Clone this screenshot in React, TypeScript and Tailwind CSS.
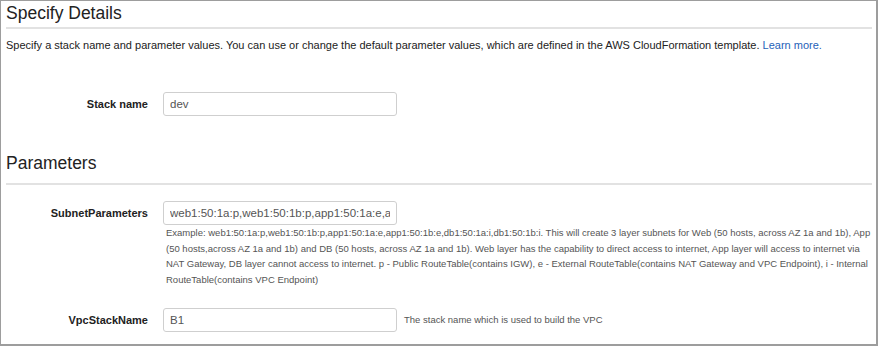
const font = { fontFamily: '"Liberation Sans", Arial, sans-serif' };

function Field({ label, value, help }: { label: string; value: string; help?: string }) {
  return (
    <div className="flex items-center h-[24px]">
      <label className="w-[142px] text-right text-[11px] font-bold text-[#222]">{label}</label>
      <input
        readOnly
        value={value}
        style={font}
        className="ml-[15px] w-[234px] h-[24px] rounded-[3px] border border-[#cfcfcf] bg-white px-[6px] text-[11.5px] text-[#555] outline-none"
      />
      {help && <span className="ml-[7px] text-[9.5px] text-[#555] whitespace-nowrap">{help}</span>}
    </div>
  );
}

export default function App() {
  const lines = [
    "Example: web1:50:1a:p,web1:50:1b:p,app1:50:1a:e,app1:50:1b:e,db1:50:1a:i,db1:50:1b:i. This will create 3 layer subnets for Web (50 hosts, across AZ 1a and 1b), App",
    "(50 hosts,across AZ 1a and 1b) and DB (50 hosts, across AZ 1a and 1b). Web layer has the capability to direct access to internet, App layer will access to internet via",
    "NAT Gateway, DB layer cannot access to internet. p - Public RouteTable(contains IGW), e - External RouteTable(contains NAT Gateway and VPC Endpoint), i - Internal",
    "RouteTable(contains VPC Endpoint)",
  ];

  return (
    <div style={font} className="w-[878px] h-[346px] bg-white overflow-hidden box-border border-l border-t border-r-2 border-b-2 border-[#9d9d9d] pl-[5px]">
      <h2 className="h-[25px] leading-[25px] text-[17.5px] font-normal text-[#222]">Specify Details</h2>
      <div className="mt-[1px] h-[2px] mr-[4px] bg-[#e2e2e2]" />
      <p className="mt-[8px] text-[11px] leading-[16px] text-[#222]">
        Specify a stack name and parameter values. You can use or change the default parameter values, which are defined in
        the AWS CloudFormation template. <span className="text-[#1f62b8]">Learn more.</span>
      </p>

      <div className="mt-[39px]">
        <Field label="Stack name" value="dev" />
      </div>

      <h2 className="mt-[34px] h-[26px] leading-[26px] text-[17.5px] font-normal text-[#222]">Parameters</h2>
      <div className="mt-[7px] h-[2px] mr-[4px] bg-[#e2e2e2]" />

      <div className="mt-[16px]">
        <Field label="SubnetParameters" value="web1:50:1a:p,web1:50:1b:p,app1:50:1a:e,app1:50:1b:e,db1:50:1a:i,db1:50:1b:i" />
        <div className="ml-[160px] text-[9.5px] leading-[15.5px] text-[#555]">
          {lines.map((l) => (
            <div key={l} className="whitespace-nowrap">{l}</div>
          ))}
        </div>
      </div>

      <div className="mt-[21px]">
        <Field label="VpcStackName" value="B1" help="The stack name which is used to build the VPC" />
      </div>
    </div>
  );
}
